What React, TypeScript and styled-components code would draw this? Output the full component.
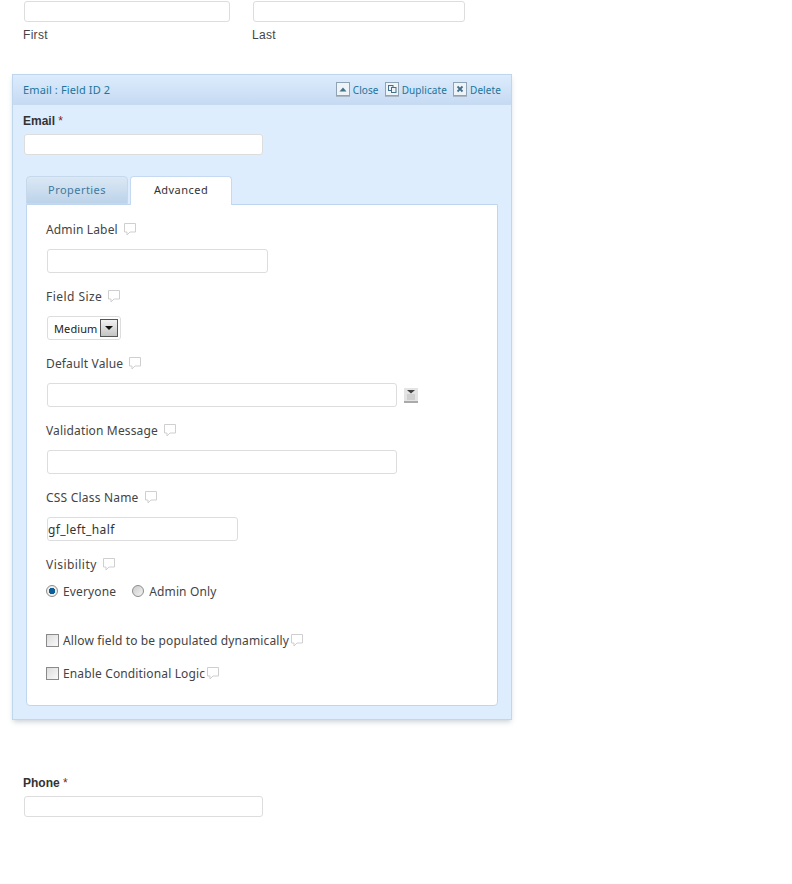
import React from 'react'
import styled, { createGlobalStyle } from 'styled-components'

const GlobalStyle = createGlobalStyle`
    html, body {
        margin: 0;
        padding: 0;
        background: #fff;
    }
    body {
        font-family: "Liberation Sans", Arial, sans-serif;
        font-size: 12px;
        color: #333;
    }
`

const Page = styled.div`
    width: 792px;
    height: 884px;
    overflow: hidden;
`

const NameRow = styled.div`
    display: flex;
    padding: 1px 0 0 23px;
    height: 74px;
    box-sizing: border-box;
`

const NameCol = styled.div<{ $width: number; $inset?: number }>`
    box-sizing: border-box;
    width: ${p => p.$width}px;
    padding-left: ${p => p.$inset || 0}px;
`

const Input = styled.input<{ $width: number; $height?: number; $top?: number }>`
    display: block;
    box-sizing: border-box;
    width: ${p => p.$width}px;
    height: ${p => p.$height || 21}px;
    margin-top: ${p => p.$top || 0}px;
    padding: 2px 0;
    border: 1px solid #ddd;
    border-radius: 3px;
    background: #fff;
    outline: none;
    font-family: "Noto Sans", sans-serif;
    font-size: 12px;
    letter-spacing: 0.4px;
    color: #333;
`

const SubLabel = styled.div`
    margin: 6px 0 0 -1px;
    font-size: 12px;
    line-height: 14px;
    letter-spacing: 0.3px;
    color: #444;
`

const FieldPanel = styled.div`
    box-sizing: border-box;
    width: 500px;
    height: 646px;
    margin-left: 12px;
    border: 1px solid #bfd7ee;
    background: #deedfd;
    box-shadow: 0 3px 5px -1px rgba(90, 110, 130, 0.3);
`

const PanelHeader = styled.div`
    display: flex;
    align-items: center;
    justify-content: space-between;
    box-sizing: border-box;
    height: 30px;
    padding: 0 10px;
    border-bottom: 1px solid #c6daf0;
    background: linear-gradient(to bottom, #dcecfd, #c6daf2);
`

const PanelTitle = styled.span`
    font-family: "Noto Sans", sans-serif;
    font-size: 11px;
    letter-spacing: 0.12px;
    color: #21759b;
`

const HeaderActions = styled.div`
    display: flex;
    align-items: center;
`

const ActionLink = styled.a`
    display: flex;
    align-items: center;
    margin-left: 6px;
    font-family: "Noto Sans", sans-serif;
    font-size: 10px;
    letter-spacing: 0.1px;
    color: #21759b;
`

const ActionIcon = styled.svg`
    width: 14px;
    height: 15px;
    margin-right: 3px;
`

const PanelBody = styled.div`
    padding: 9px 0 0 11px;
`

const FieldLabel = styled.div`
    margin-left: -1px;
    font-size: 12px;
    line-height: 14px;
    font-weight: bold;
    color: #333;
`

const Required = styled.span`
    font-weight: normal;
    color: #7a1f1f;
`

const TabBar = styled.div`
    display: flex;
    margin: 21px 0 0 2px;
    height: 28px;
`

const Tab = styled.div<{ $active?: boolean }>`
    box-sizing: border-box;
    width: 102px;
    height: ${p => (p.$active ? 29 : 28)}px;
    margin-right: 2px;
    border: 1px solid ${p => (p.$active ? '#c5daf0' : '#c6d9ec')};
    border-bottom: ${p => (p.$active ? 'none' : '1px solid #c6d9ec')};
    border-radius: 4px 4px 0 0;
    background: ${p => (p.$active ? '#fff' : 'linear-gradient(to bottom, #dbe8f5, #bdd3e9)')};
    position: relative;
    font-family: "Noto Sans", sans-serif;
    font-size: 11px;
    line-height: 26px;
    letter-spacing: 0.45px;
    text-align: center;
    color: ${p => (p.$active ? '#333' : '#3d7a9e')};
`

const TabPanel = styled.div`
    box-sizing: border-box;
    width: 472px;
    height: 502px;
    margin-left: 2px;
    padding: 14px 19px 0;
    border: 1px solid #bfd7ee;
    border-radius: 0 0 4px 4px;
    background: #fff;
`

const Setting = styled.div`
    height: 67px;
`

const SettingLabel = styled.div<{ $track?: number }>`
    display: flex;
    align-items: center;
    height: 20px;
    font-family: "Noto Sans", sans-serif;
    font-size: 12px;
    letter-spacing: ${p => p.$track || 0.15}px;
    color: #444;
`

const SettingControl = styled.div`
    display: flex;
    align-items: center;
    margin: 10px 0 0 1px;
`

const Tip = styled.svg<{ $flush?: boolean }>`
    width: 14px;
    height: 14px;
    margin-left: ${p => (p.$flush ? 1 : 5)}px;
    flex: none;
`

const SelectBox = styled.div`
    display: flex;
    align-items: center;
    justify-content: space-between;
    box-sizing: border-box;
    width: 74px;
    height: 24px;
    padding: 0 2px 0 6px;
    border: 1px solid #ddd;
    border-radius: 3px;
    font-family: "Noto Sans", sans-serif;
    font-size: 11px;
    letter-spacing: 0.1px;
    color: #222;
`

const SelectArrow = styled.div`
    display: flex;
    align-items: center;
    justify-content: center;
    box-sizing: border-box;
    width: 18px;
    height: 18px;
    border: 1px solid #555;
    background: linear-gradient(to bottom, #f2f2f2, #c4c4c4);

    &::after {
        content: '';
        border-left: 4px solid transparent;
        border-right: 4px solid transparent;
        border-top: 4px solid #111;
    }
`

const MergeIcon = styled.svg`
    width: 14px;
    height: 15px;
    margin-left: 7px;
`

const RadioRow = styled.div`
    display: flex;
    align-items: center;
    height: 20px;
    margin-top: 7px;
`

const Radio = styled.span<{ $checked?: boolean }>`
    box-sizing: border-box;
    width: 12px;
    height: 12px;
    margin-right: 5px;
    border: 1px solid #8c8c8c;
    border-radius: 50%;
    background: ${p =>
        p.$checked
            ? 'radial-gradient(circle, #0b5f96 0, #0b5f96 3px, #eee 3.5px)'
            : 'linear-gradient(135deg, #ccc, #f3f3f3)'};
`

const OptionText = styled.span<{ $gap?: number }>`
    margin-right: ${p => p.$gap || 0}px;
    font-family: "Noto Sans", sans-serif;
    font-size: 12px;
    letter-spacing: 0.14px;
    color: #444;
`

const CheckRow = styled.div<{ $top: number }>`
    display: flex;
    align-items: center;
    height: 20px;
    margin-top: ${p => p.$top}px;
`

const Checkbox = styled.span`
    box-sizing: border-box;
    width: 13px;
    height: 13px;
    margin-right: 4px;
    border: 1px solid #8a8a8a;
    background: linear-gradient(135deg, #dcdcdc, #fafafa);
`

const PhoneBlock = styled.div`
    margin: 56px 0 0 24px;
`

const TipIcon = ({ flush }: { flush?: boolean }): JSX.Element => (
    <Tip $flush={flush} viewBox="0 0 14 14">
        <path
            d="M1.5 1.5h11v8.5H7L4 13V10H1.5z"
            fill="#fff"
            stroke="#cfcfcf"
            strokeWidth="1"
        />
    </Tip>
)

const ActionFrame = (): JSX.Element => (
    <>
        <rect x="0" y="1" width="14" height="14" fill="#a9b7c4" />
        <rect x="0.5" y="0.5" width="13" height="13" fill="#eef3f8" stroke="#8fa3b5" />
    </>
)

const App = function (): JSX.Element {
    return (
        <Page>
            <GlobalStyle />
            <NameRow>
                <NameCol $width={230} $inset={1}>
                    <Input $width={206} />
                    <SubLabel>First</SubLabel>
                </NameCol>
                <NameCol $width={213}>
                    <Input $width={212} />
                    <SubLabel>Last</SubLabel>
                </NameCol>
            </NameRow>

            <FieldPanel>
                <PanelHeader>
                    <PanelTitle>Email : Field ID 2</PanelTitle>
                    <HeaderActions>
                        <ActionLink>
                            <ActionIcon viewBox="0 0 14 15">
                                <ActionFrame />
                                <path d="M3.5 9.5 7 5.5l3.5 4z" fill="#44708c" />
                            </ActionIcon>
                            Close
                        </ActionLink>
                        <ActionLink>
                            <ActionIcon viewBox="0 0 14 15">
                                <ActionFrame />
                                <rect x="3.5" y="3.5" width="4.5" height="5" fill="none" stroke="#44708c" />
                                <rect x="6.5" y="5.5" width="4.5" height="5" fill="#eef3f8" stroke="#44708c" />
                            </ActionIcon>
                            Duplicate
                        </ActionLink>
                        <ActionLink>
                            <ActionIcon viewBox="0 0 14 15">
                                <ActionFrame />
                                <path d="M4.5 4.5l5 5M9.5 4.5l-5 5" stroke="#44708c" strokeWidth="1.8" />
                            </ActionIcon>
                            Delete
                        </ActionLink>
                    </HeaderActions>
                </PanelHeader>

                <PanelBody>
                    <FieldLabel>
                        Email <Required>*</Required>
                    </FieldLabel>
                    <Input $width={239} $top={6} />

                    <TabBar>
                        <Tab>Properties</Tab>
                        <Tab $active>Advanced</Tab>
                    </TabBar>
                    <TabPanel>
                        <Setting>
                            <SettingLabel>
                                Admin Label
                                <TipIcon />
                            </SettingLabel>
                            <SettingControl>
                                <Input $width={221} $height={24} />
                            </SettingControl>
                        </Setting>
                        <Setting>
                            <SettingLabel $track={0.45}>
                                Field Size
                                <TipIcon />
                            </SettingLabel>
                            <SettingControl>
                                <SelectBox>
                                    Medium
                                    <SelectArrow />
                                </SelectBox>
                            </SettingControl>
                        </Setting>
                        <Setting>
                            <SettingLabel>
                                Default Value
                                <TipIcon />
                            </SettingLabel>
                            <SettingControl>
                                <Input $width={350} $height={24} />
                                <MergeIcon viewBox="0 0 14 15">
                                    <rect x="0" y="0" width="14" height="15" fill="#e4e4e4" />
                                    <rect x="0" y="13" width="14" height="2" fill="#aaa" />
                                    <path d="M3 2h8L7 5.5z" fill="#444" />
                                    <path d="M3 7h8M3 9h8M3 11h8" stroke="#bbb" />
                                </MergeIcon>
                            </SettingControl>
                        </Setting>
                        <Setting>
                            <SettingLabel>
                                Validation Message
                                <TipIcon />
                            </SettingLabel>
                            <SettingControl>
                                <Input $width={350} $height={24} />
                            </SettingControl>
                        </Setting>
                        <Setting>
                            <SettingLabel $track={0.2}>
                                CSS Class Name
                                <TipIcon />
                            </SettingLabel>
                            <SettingControl>
                                <Input $width={191} $height={24} defaultValue="gf_left_half" />
                            </SettingControl>
                        </Setting>

                        <SettingLabel $track={0.45}>
                            Visibility
                            <TipIcon />
                        </SettingLabel>
                        <RadioRow>
                            <Radio $checked />
                            <OptionText $gap={16}>Everyone</OptionText>
                            <Radio />
                            <OptionText>Admin Only</OptionText>
                        </RadioRow>

                        <CheckRow $top={29}>
                            <Checkbox />
                            <OptionText>Allow field to be populated dynamically</OptionText>
                            <TipIcon flush />
                        </CheckRow>
                        <CheckRow $top={13}>
                            <Checkbox />
                            <OptionText>Enable Conditional Logic</OptionText>
                            <TipIcon flush />
                        </CheckRow>
                    </TabPanel>
                </PanelBody>
            </FieldPanel>

            <PhoneBlock>
                <FieldLabel>
                    Phone <Required>*</Required>
                </FieldLabel>
                <Input $width={239} $top={6} />
            </PhoneBlock>
        </Page>
    )
}

export default App
